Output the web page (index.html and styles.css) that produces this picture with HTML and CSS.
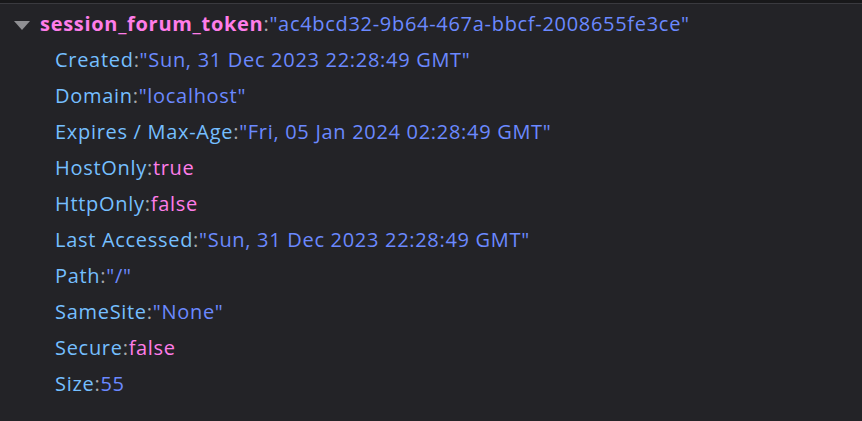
FILE: index.html
```html
<!DOCTYPE html>
<html>
<head>
<meta charset="utf-8">
<link rel="stylesheet" href="styles.css">
</head>
<body>
<div class="topbar"></div>
<div class="tree">
  <div class="row root">
    <span class="arrow"></span>
    <span class="rootkey">session_forum_token</span><span class="colon">:</span><span class="str">"ac4bcd32-9b64-467a-bbcf-2008655fe3ce"</span>
  </div>
  <div class="row child"><span class="key">Created</span><span class="colon">:</span><span class="str">"Sun, 31 Dec 2023 22:28:49 GMT"</span></div>
  <div class="row child"><span class="key">Domain</span><span class="colon">:</span><span class="str">"localhost"</span></div>
  <div class="row child"><span class="key">Expires / Max-Age</span><span class="colon">:</span><span class="str">"Fri, 05 Jan 2024 02:28:49 GMT"</span></div>
  <div class="row child"><span class="key">HostOnly</span><span class="colon">:</span><span class="bool">true</span></div>
  <div class="row child"><span class="key">HttpOnly</span><span class="colon">:</span><span class="bool">false</span></div>
  <div class="row child"><span class="key">Last Accessed</span><span class="colon">:</span><span class="str">"Sun, 31 Dec 2023 22:28:49 GMT"</span></div>
  <div class="row child"><span class="key">Path</span><span class="colon">:</span><span class="str">"/"</span></div>
  <div class="row child"><span class="key">SameSite</span><span class="colon">:</span><span class="str">"None"</span></div>
  <div class="row child"><span class="key">Secure</span><span class="colon">:</span><span class="bool">false</span></div>
  <div class="row child"><span class="key">Size</span><span class="colon">:</span><span class="num">55</span></div>
</div>
</body>
</html>
```
FILE: styles.css
```css
html, body {
  margin: 0;
  padding: 0;
  background: #232327;
  height: 100%;
}
body {
  font-family: "Open Sans", "Noto Sans", sans-serif;
  font-size: 20px;
  letter-spacing: 0.7px;
  overflow: hidden;
}
.topbar {
  height: 3px;
  background: #18181a;
  border-bottom: 1px solid #3a3a3f;
}
.tree {
  padding-top: 2px;
}
.row {
  height: 36px;
  line-height: 36px;
  white-space: nowrap;
  display: flex;
  align-items: center;
}
.root {
  padding-left: 14px;
}
.child {
  padding-left: 55px;
}
.arrow {
  width: 0;
  height: 0;
  border-left: 8px solid transparent;
  border-right: 8px solid transparent;
  border-top: 9px solid #8f8f93;
  margin-right: 10px;
  margin-top: 2px;
}
.rootkey {
  color: #ff7de9;
  font-weight: bold;
  letter-spacing: 0.7px;
}
.key { color: #75bfff; }
.colon { color: #a8a8ab; }
.str { color: #6b89ff; }
.bool { color: #ff7de9; }
.num { color: #6b89ff; }
```
